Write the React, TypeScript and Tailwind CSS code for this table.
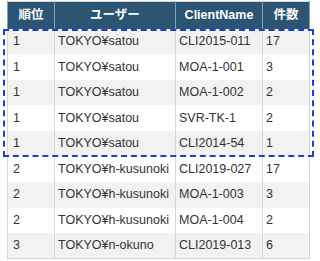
import React from "react";

const ROWS: [string, string, string, string][] = [
  ["1", "TOKYO¥satou", "CLI2015-011", "17"],
  ["1", "TOKYO¥satou", "MOA-1-001", "3"],
  ["1", "TOKYO¥satou", "MOA-1-002", "2"],
  ["1", "TOKYO¥satou", "SVR-TK-1", "2"],
  ["1", "TOKYO¥satou", "CLI2014-54", "1"],
  ["2", "TOKYO¥h-kusunoki", "CLI2019-027", "17"],
  ["2", "TOKYO¥h-kusunoki", "MOA-1-003", "3"],
  ["2", "TOKYO¥h-kusunoki", "MOA-1-004", "2"],
  ["3", "TOKYO¥n-okuno", "CLI2019-013", "6"],
];

const HEADERS = ["順位", "ユーザー", "ClientName", "件数"];
const WIDTHS = ["w-[47px]", "w-[121px]", "w-[87px]", "w-[47px]"];

export default function App() {
  return (
    <div className="relative w-[320px] h-[261px] bg-white overflow-hidden pt-px pl-[7px] font-['Liberation_Sans','Noto_Sans_CJK_JP',sans-serif] text-[12.5px] text-[#333]">
      <table className="border-collapse table-fixed w-[303px] border border-[#d6d6d6]">
        <thead>
          <tr className="h-[27px] bg-[#2c5574] text-white font-bold">
            {HEADERS.map((h, i) => (
              <th key={h} className={`${WIDTHS[i]} text-center border-x border-[#8aa0b3] p-0 font-bold`}>
                {h}
              </th>
            ))}
          </tr>
        </thead>
        <tbody>
          {ROWS.map((r, i) => (
            <tr key={i} className={`h-[25.6px] ${i % 2 === 0 ? "bg-[#f2f2f2]" : "bg-white"}`}>
              {r.map((c, j) => (
                <td key={j} className={`${j === 0 ? "pl-[5px]" : "pl-[3px]"} pr-0 py-0 border-x border-[#d6d6d6] whitespace-nowrap overflow-hidden`}>
                  {c}
                </td>
              ))}
            </tr>
          ))}
        </tbody>
      </table>
      <div className="absolute left-[3px] top-[29px] w-[311px] h-[128px] border-2 border-dashed border-[#1d3fd1]" />
    </div>
  );
}
